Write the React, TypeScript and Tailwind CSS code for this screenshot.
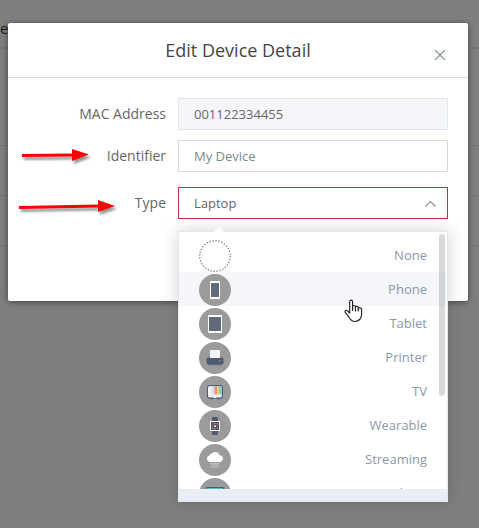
import React, { useState } from "react";

const DEVICE_TYPES = ["None", "Phone", "Tablet", "Printer", "TV", "Wearable", "Streaming", "Desktop"];

function DeviceIcon({ type }: { type: string }) {
  if (type === "None") {
    return (
      <svg className="size-8 shrink-0" viewBox="0 0 32 32" aria-hidden="true">
        <circle cx="16" cy="16" r="15.3" fill="#fff" stroke="#8a8a8a" strokeWidth="1.4" strokeDasharray="1.4 1.6" />
      </svg>
    );
  }
  return (
    <svg className="size-8 shrink-0" viewBox="0 0 32 32" aria-hidden="true">
      <circle cx="16" cy="16" r="16" fill="#9b9b9b" />
      {type === "Phone" && (
        <>
          <rect x="11" y="7" width="10" height="18" rx="1" fill="#fff" />
          <rect x="12" y="9" width="8" height="14" fill="#616a79" />
        </>
      )}
      {type === "Tablet" && (
        <>
          <rect x="9" y="7" width="14" height="18" rx="0.7" fill="#fff" />
          <rect x="10" y="9" width="12" height="14" fill="#616a79" />
          <rect x="15" y="23.5" width="2" height="1" fill="#c8ccd2" />
        </>
      )}
      {type === "Printer" && (
        <>
          <rect x="9" y="21" width="14" height="2.6" rx="1.2" fill="#747b88" />
          <rect x="7.5" y="15.5" width="17" height="7" rx="1.8" fill="#4c5b73" />
          <rect x="11" y="8" width="10" height="8" rx="0.6" fill="#f4f5f6" />
          <path d="M19 19h1.5" stroke="#5fa889" strokeWidth="1" />
          <path d="M20.7 19h2" stroke="#c9685f" strokeWidth="1" />
        </>
      )}
      {type === "TV" && (
        <>
          <path d="M11 22h3v1.3h-3zM18 22h3v1.3h-3z" fill="#4c5b73" />
          <rect x="8" y="9" width="16" height="13.7" rx="2.4" fill="#4c5b73" />
          <rect x="9" y="10" width="14" height="11.5" rx="1.8" fill="#f1f1f3" />
          <path d="M12 10h2v8.600h-2z" fill="#e2e3ec" />
          <path d="M14 10h2v8.600h-2z" fill="#cdcfe0" />
          <path d="M16 10h2v8.600h-2z" fill="#ee8f6b" />
          <path d="M18 10h2v8.600h-2z" fill="#f1ce76" />
          <path d="M20 10h1.200q1.800.2 1.800 1.800v6.800H20z" fill="#8fc8bf" />
          <path d="M15 21h2v1h-2z" fill="#fff" />
        </>
      )}
      {type === "Wearable" && (
        <>
          <path d="M13 11V8l.8-1h4.400l.8 1v3zM13 21v3l.8 1h4.400l.8-1v-3z" fill="#4c5b73" />
          <rect x="11" y="11" width="10" height="10" rx="1" fill="#fff" />
          <rect x="12" y="12" width="8" height="8" fill="#4b515b" />
          <path d="M13 13h1.500v1.500H13zM17.500 17.500H19V19h-1.500z" fill="#8f67b6" />
          <path d="M15.200 12.600h1.500v1.500h-1.500zM13 17.500h1.500V19H13z" fill="#d98146" />
          <path d="M17.500 13H19v1.500h-1.500zM15.200 18h1.500v1.500h-1.500z" fill="#5ba76a" />
          <path d="M12.500 15.200H14v1.500h-1.500zM18 15.200h1.500v1.500H18z" fill="#bb5560" />
          <path d="M15.200 15.200h1.700v1.700h-1.700z" fill="#f3f3f3" />
        </>
      )}
      {type === "Streaming" && (
        <>
          <path
            d="M11.700 18C9.400 18 8 16.500 8 14.700c0-1.700 1.200-3 2.800-3.200 0-1.500 1.300-2.600 2.700-2.300C14.200 8.300 15.300 8 16.400 8c2.200 0 3.800 1.300 4.200 3.200 2 .1 3.400 1.400 3.400 3.300S22.400 18 20.400 18z"
            fill="#fff"
          />
          <path
            d="M11 19.500h10M12 21q4-1.500 8 0M11.500 22.500q4.500-1.500 9 0M14 23.700q2-1 4 0"
            fill="none"
            stroke="#c9cbcd"
            strokeWidth="0.700"
          />
        </>
      )}
      {type === "Desktop" && (
        <>
          <rect x="7" y="9" width="18" height="14" rx="1" fill="#4c5b73" />
          <rect x="8" y="10" width="16" height="11" fill="#58b9c3" />
        </>
      )}
    </svg>
  );
}

function Arrow({ className, d, head }: { className: string; d: string; head: string }) {
  return (
    <svg className={`pointer-events-none absolute drop-shadow-[2px_3px_1px_rgba(0,0,0,0.4)] ${className}`} aria-hidden="true">
      <path d={d} stroke="#fe0000" strokeWidth="3" fill="none" />
      <path d={head} fill="#fe0000" />
    </svg>
  );
}

function HandCursor() {
  return (
    <svg className="pointer-events-none absolute top-[67px] left-[165px] h-[24px] w-[19px]" viewBox="0 0 20 25" aria-hidden="true">
      <path
        d="M6 15V2.700C6 .500 9 .500 9 2.700V9.500V7.800C9 6.300 12 6.300 12 8V10V8.600C12 7.200 15 7.200 15 8.900V11V10C15 8.800 18.500 8.800 18.500 10.500V16C18.500 20.500 15.500 23.500 11.500 23.500C8.500 23.500 7 22 5.300 19L1.300 14C.5 12.300 2.400 11 3.700 12.200L6 15"
        fill="#fff"
        stroke="#20202c"
        strokeWidth="1.200"
        strokeLinejoin="round"
      />
      <path d="M9 9v3.500M12 9.500v3.500M15 10.500V13" stroke="#20202c" strokeWidth="1.200" />
    </svg>
  );
}

function PageBehind() {
  return (
    <div className="absolute inset-0 bg-[#7f7f7f]" aria-hidden="true">
      <div className="flex h-[49px] items-end border-b-2 border-[#75757b] pb-2 text-[15px] text-[#222]">e</div>
      <div className="h-[97px] border-b border-[#757575]" />
      <div className="h-[50px] border-b border-[#757575]" />
      <div className="h-[50px] border-b border-[#757575]" />
    </div>
  );
}

function TypeMenu({ active, onPick }: { active: string; onPick: (type: string) => void }) {
  return (
    <div className="absolute top-11 right-0 left-0 border border-[#e4e7f2] bg-white shadow-[0_0_16px_rgba(0,0,0,0.18)]">
      <svg className="absolute -top-[6px] left-[34px] h-[7px] w-3" viewBox="0 0 12 7" aria-hidden="true">
        <path d="M0 7 6 1l6 6z" fill="#fff" />
        <path d="M0 6 6 .500l6 5.500" fill="none" stroke="#eef0f6" />
      </svg>
      <ul role="listbox" aria-label="Device types" className="h-[257px] overflow-hidden pt-[6px]">
        {DEVICE_TYPES.map((type) => (
          <li
            key={type}
            role="option"
            aria-selected={type === active}
            onClick={() => onPick(type)}
            className={`flex h-[34px] cursor-pointer items-center justify-between px-5 pt-[2px] text-[13px] text-[#8a97ab] ${
              type === "Phone" ? "bg-[#f5f6fa]" : ""
            }`}
          >
            <DeviceIcon type={type} />
            <span>{type}</span>
          </li>
        ))}
      </ul>
      <div className="h-3 bg-[#e9edf5]" />
      <div className="absolute top-[2px] right-[2px] h-[162px] w-[6px] rounded-full bg-black/15" />
      <HandCursor />
    </div>
  );
}

export default function App() {
  const [type, setType] = useState("Laptop");
  const label = "w-[158px] shrink-0 pr-3 text-right text-sm text-[#666]";
  const field = "h-8 w-full min-w-0 rounded-none border px-[15px] text-[13px] outline-none";

  return (
    <div className="relative min-h-screen font-['Open_Sans','Noto_Sans',sans-serif]">
      <PageBehind />
      <div className="relative pt-[23px] pr-[11px] pl-2">
        <section role="dialog" aria-labelledby="title" className="relative rounded-[2px] bg-white shadow-[0_1px_6px_rgba(0,0,0,0.5)]">
          <header className="relative flex h-[55px] items-center justify-center border-b border-[#dcdddf]">
            <h1 id="title" className="text-lg text-[#444]">
              Edit Device Detail
            </h1>
            <button type="button" aria-label="Close" className="absolute top-[27px] right-[23px]">
              <svg className="size-[10px]" viewBox="0 0 10 10" aria-hidden="true">
                <path d="M0 0l10 10M10 0L0 10" stroke="#6f8b96" strokeWidth="1.200" />
              </svg>
            </button>
          </header>
          <form className="pt-5 pr-5 pb-[82px] pl-3">
            <div className="flex items-center">
              <label htmlFor="mac" className={label}>
                MAC Address
              </label>
              <input id="mac" readOnly defaultValue="001122334455" className={`${field} border-[#e1e4ee] bg-[#f5f6fa] text-[#666]`} />
            </div>
            <div className="mt-[10px] flex items-center">
              <label htmlFor="identifier" className={label}>
                Identifier
              </label>
              <input id="identifier" defaultValue="My Device" className={`${field} border-[#d8dadd] bg-white text-[#738b93]`} />
            </div>
            <div className="mt-[15px] flex items-center">
              <label htmlFor="type" className={label}>
                Type
              </label>
              <div className="relative flex-1">
                <select
                  id="type"
                  value={type}
                  onChange={(event) => setType(event.target.value)}
                  className={`${field} block appearance-none border-[#c72b41] bg-white pt-[2px] text-[#666]`}
                >
                  {["Laptop", ...DEVICE_TYPES].map((name) => (
                    <option key={name}>{name}</option>
                  ))}
                </select>
                <svg className="pointer-events-none absolute top-[13px] right-3 h-[7px] w-[11px]" viewBox="0 0 11 7" aria-hidden="true">
                  <path d="M.5 6.500l5-5 5 5" fill="none" stroke="#8296a3" strokeWidth="1.200" />
                </svg>
                <TypeMenu active={type} onPick={setType} />
              </div>
            </div>
          </form>
          <Arrow className="top-[120px] left-3 h-6 w-[76px]" d="M2 12.500L53 12" head="M52 6l17 5.500L52 18z" />
          <Arrow className="top-[170px] left-2 h-7 w-[106px]" d="M3 14.500L84 13" head="M82 7l17 6-17 6z" />
        </section>
      </div>
    </div>
  );
}
